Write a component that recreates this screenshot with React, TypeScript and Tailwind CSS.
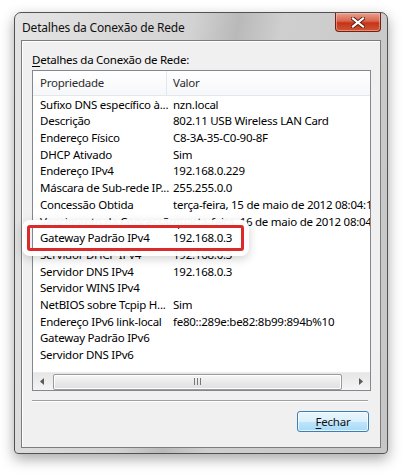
import React from 'react';

const rows: [string, string][] = [
  ['Sufixo DNS específico à...', 'nzn.local'],
  ['Descrição', '802.11 USB Wireless LAN Card'],
  ['Endereço Físico', 'C8-3A-35-C0-90-8F'],
  ['DHCP Ativado', 'Sim'],
  ['Endereço IPv4', '192.168.0.229'],
  ['Máscara de Sub-rede IP...', '255.255.0.0'],
  ['Concessão Obtida', 'terça-feira, 15 de maio de 2012 08:04:13'],
  ['Vencimento da Concessão', 'quarta-feira, 16 de maio de 2012 08:04:16'],
  ['Gateway Padrão IPv4', '192.168.0.3'],
  ['Servidor DHCP IPv4', '192.168.0.3'],
  ['Servidor DNS IPv4', '192.168.0.3'],
  ['Servidor WINS IPv4', ''],
  ['NetBIOS sobre Tcpip H...', 'Sim'],
  ['Endereço IPv6 link-local', 'fe80::289e:be82:8b99:894b%10'],
  ['Gateway Padrão IPv6', ''],
  ['Servidor DNS IPv6', ''],
];

const font = { fontFamily: '"Noto Sans", "Open Sans", sans-serif' };

const App = () => {
  return (
    <div className="w-[406px] h-[475px] bg-white overflow-hidden text-[11.5px] tracking-[-0.25px] text-black" style={font}>
      {/* Window */}
      <div className="mt-[12px] ml-[14px] w-[374px] h-[442px] border border-[#525252] rounded-t-[7px] rounded-b-[4px] bg-[linear-gradient(100deg,#e4e4e4_0%,#d2d2d2_40%,#b9b9b9_50%,#cfcfcf_60%,#c6c6c6_100%)] shadow-[0_5px_14px_rgba(0,0,0,0.35)] flex flex-col">
        {/* Title bar */}
        <div className="h-[27px] flex items-start justify-between">
          <span className="pl-[7px] pt-[7px] leading-[15px] text-[12px] tracking-[-0.2px] text-[#111]">Detalhes da Conexão de Rede</span>
          <button className="mr-[6px] w-[46px] h-[19px] rounded-b-[4px] border border-t-0 border-[#6e2115] bg-[linear-gradient(#e9a090_0%,#d9654a_45%,#c4341a_55%,#d2552f_100%)] shadow-[inset_0_0_0_1px_rgba(255,200,190,0.5)] flex items-center justify-center">
            <svg width="14" height="11" viewBox="0 0 14 11">
              <path d="M2 1.5 L12 9.5 M12 1.5 L2 9.5" stroke="#5a1a10" strokeWidth="4" strokeLinecap="square" />
              <path d="M2 1.5 L12 9.5 M12 1.5 L2 9.5" stroke="#fff" strokeWidth="2.2" strokeLinecap="square" />
            </svg>
          </button>
        </div>

        {/* Client area */}
        <div className="mx-[6px] h-[408px] border border-[#7c7c7c] bg-[#f0f0f0] shadow-[inset_1px_1px_0_#fff] flex flex-col">
          <div className="pl-[10px] pt-[11px] leading-[15px]">
            <span className="underline underline-offset-2">D</span>etalhes da Conexão de Rede:
          </div>

          {/* List view */}
          <div className="relative mt-[3px] ml-[10px] w-[339px] h-[321px] border border-[#828790] bg-white flex flex-col">
            <div className="h-[25px] shrink-0 flex border-b border-[#e3e6ea] bg-[linear-gradient(#ffffff,#f6f7f9)] text-[#2c2c2c]">
              <div className="w-[134px] pl-[7px] flex items-center border-r border-[#e3e6ea]">Propriedade</div>
              <div className="pl-[6px] flex items-center">Valor</div>
            </div>
            <div className="h-[276px] shrink-0 overflow-hidden">
              {rows.map(([k, v]) => (
                <div key={k} className="h-[16.7px] flex items-center whitespace-nowrap">
                  <div className="w-[134px] shrink-0 pl-[7px]">{k}</div>
                  <div className="pl-[6px]">{v}</div>
                </div>
              ))}
            </div>

            {/* Horizontal scrollbar */}
            <div className="h-[18px] shrink-0 flex items-center bg-[linear-gradient(#e6e6e6,#f4f4f4)] border-t border-[#ececec]">
              <div className="w-[18px] h-full flex items-center justify-center">
                <svg width="4" height="7" viewBox="0 0 4 7"><path d="M4 0 L0 3.5 L4 7 Z" fill="#5a5a5a" /></svg>
              </div>
              <div className="ml-[2px] w-[289px] h-[16px] rounded-[2px] border border-[#9a9a9a] bg-[linear-gradient(#f6f6f6,#dedede)] shadow-[inset_0_0_0_1px_#fff] flex items-center justify-center gap-[2px]">
                <div className="w-[1px] h-[7px] bg-[#777]" />
                <div className="w-[1px] h-[7px] bg-[#777]" />
                <div className="w-[1px] h-[7px] bg-[#777]" />
              </div>
              <div className="ml-auto w-[18px] h-full flex items-center justify-center">
                <svg width="4" height="7" viewBox="0 0 4 7"><path d="M0 0 L4 3.5 L0 7 Z" fill="#5a5a5a" /></svg>
              </div>
            </div>

            {/* Red highlight frame over the gateway row */}
            <div className="absolute left-[-6px] top-[154px] w-[217px] h-[26px] rounded-[3px] border-[3px] border-[#db2a2a] shadow-[0_0_0_5px_rgba(255,255,255,0.96),0_3px_10px_5px_rgba(0,0,0,0.18)] pointer-events-none" />
          </div>

          <div className="mt-[9px] ml-[10px] w-[336px] h-[2px] border-t border-[#a0a0a0] border-b border-b-white" />

          <div className="mt-[9px] flex justify-end pr-[11px]">
            <button className="w-[72px] h-[21px] rounded-[3px] border border-[#3c7fb1] bg-[linear-gradient(#eaf6fd_0%,#d9f0fc_50%,#bee6fd_51%,#a7d9f5_100%)] shadow-[inset_0_0_0_1px_rgba(255,255,255,0.7)] text-[#111] leading-[15px]">
              <span className="underline underline-offset-2">F</span>echar
            </button>
          </div>
        </div>
      </div>
    </div>
  );
};

export default App;
